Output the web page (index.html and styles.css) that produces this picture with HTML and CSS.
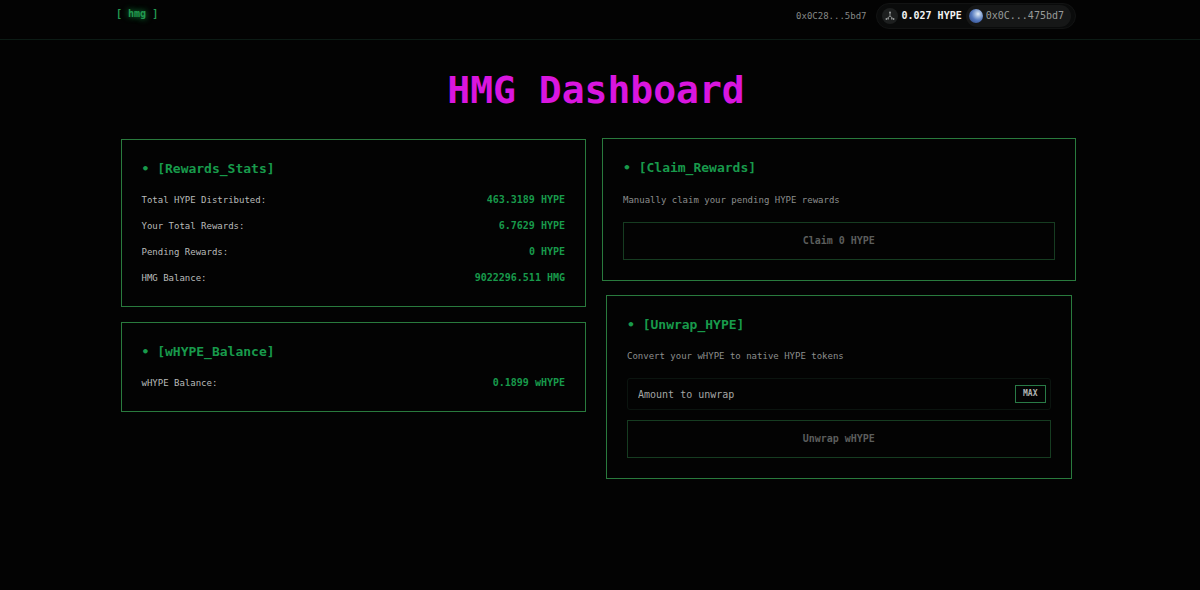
FILE: index.html
```html
<!DOCTYPE html>
<html lang="en">
<head>
<meta charset="utf-8">
<title>HMG Dashboard</title>
<link rel="stylesheet" href="styles.css">
</head>
<body>
<header class="topbar">
  <div class="topbar-inner">
    <a class="logo" href="#">[ <span class="logo-name">hmg</span> ]</a>
    <div class="wallet">
      <span class="address">0x0C28...5bd7</span>
      <button class="account" type="button">
        <span class="chain">
          <svg viewBox="0 0 16 16" width="16" height="16" aria-hidden="true">
            <circle cx="8" cy="8" r="8" fill="#1d1f1f"/>
            <g stroke="#858888" stroke-width="1" fill="none">
              <path d="M8 4.500V8M8 8L4.500 11M8 8l3.500 3M6.500 9.500v2M9.500 9.500v2"/>
            </g>
            <g fill="#989b9b">
              <circle cx="8" cy="4.500" r="1"/>
              <circle cx="4.500" cy="11" r="1"/>
              <circle cx="11.500" cy="11" r="1"/>
            </g>
          </svg>
        </span>
        <span class="balance">0.027 HYPE</span>
        <span class="account-id"><span class="avatar"></span>0x0C...475bd7</span>
      </button>
    </div>
  </div>
</header>
<main class="page">
  <h1 class="title">HMG Dashboard</h1>
  <div class="columns">
    <div class="column">
      <section class="card">
        <h2 class="card-title">• [Rewards_Stats]</h2>
        <dl class="stats">
          <div class="stat"><dt>Total HYPE Distributed:</dt><dd>463.3189 HYPE</dd></div>
          <div class="stat"><dt>Your Total Rewards:</dt><dd>6.7629 HYPE</dd></div>
          <div class="stat"><dt>Pending Rewards:</dt><dd>0 HYPE</dd></div>
          <div class="stat"><dt>HMG Balance:</dt><dd>9022296.511 HMG</dd></div>
        </dl>
      </section>
      <section class="card">
        <h2 class="card-title">• [wHYPE_Balance]</h2>
        <dl class="stats">
          <div class="stat"><dt>wHYPE Balance:</dt><dd>0.1899 wHYPE</dd></div>
        </dl>
      </section>
    </div>
    <div class="column column-actions">
      <section class="card card-active">
        <h2 class="card-title">• [Claim_Rewards]</h2>
        <p class="note">Manually claim your pending HYPE rewards</p>
        <button class="action" type="button" disabled>Claim 0 HYPE</button>
      </section>
      <section class="card">
        <h2 class="card-title">• [Unwrap_HYPE]</h2>
        <p class="note">Convert your wHYPE to native HYPE tokens</p>
        <div class="amount">
          <input class="amount-input" type="text" placeholder="Amount to unwrap" aria-label="Amount to unwrap">
          <button class="max" type="button">MAX</button>
        </div>
        <button class="action" type="button" disabled>Unwrap wHYPE</button>
      </section>
    </div>
  </div>
</main>
</body>
</html>
```
FILE: styles.css
```css
* {
  box-sizing: border-box;
}

body {
  margin: 0;
  padding-right: 8px;
  min-height: 100vh;
  background: #030303;
  color: #b9bbba;
  font-family: "DejaVu Sans Mono", "Liberation Mono", monospace;
  font-size: 10px;
  line-height: 16px;
}

button,
input {
  font: inherit;
}

.topbar {
  margin-right: -8px;
  padding: 3px 8px 10px 0;
  border-bottom: 1px solid #0c1b15;
}

.topbar-inner {
  display: flex;
  justify-content: space-between;
  align-items: flex-start;
  max-width: 960px;
  margin: 0 auto;
}

.logo {
  padding: 3px 0;
  color: #229a50;
  font-weight: 700;
  text-decoration: none;
}

.logo-name {
  text-shadow: 0 0 6px #16a34a;
}

.wallet {
  display: flex;
  align-items: center;
  gap: 9px;
}

.address {
  color: #858886;
  font-size: 9px;
}

.account {
  display: flex;
  align-items: center;
  padding: 1px 4px 1px 5px;
  border: 1px solid #121313;
  border-radius: 13px;
  background: #0a0b0b;
  color: #f3f3f3;
}

.chain {
  display: flex;
  margin-right: 4px;
}

.balance {
  margin-right: 4px;
  font-weight: 700;
}

.account-id {
  display: flex;
  align-items: center;
  gap: 3px;
  padding: 3px 7px 3px 3px;
  border-radius: 11px;
  background: #161717;
  color: #989b9a;
}

.avatar {
  width: 14px;
  height: 14px;
  border-radius: 50%;
  background: radial-gradient(circle at 65% 35%, #e4edf7 0, #a5bde0 20%, #5478bd 50%, #273e78 100%);
}

.page {
  max-width: 951px;
  margin: 0 auto;
}

.title {
  margin: 0;
  padding: 26px 0 25px;
  color: #d916df;
  font-size: 38px;
  line-height: 48px;
  font-weight: 700;
  text-align: center;
}

.columns {
  display: grid;
  grid-template-columns: 1fr 1fr;
  align-items: start;
  gap: 20px;
}

.column {
  display: grid;
  gap: 15px;
}

.column-actions {
  gap: 14px;
  margin-top: -1px;
}

.card {
  padding: 20px;
  border: 1px solid #297a3d;
}

.card-title {
  margin: 0 0 14px;
  color: #189a4b;
  font-size: 13px;
  line-height: 18px;
  font-weight: 700;
}

.card-active {
  margin: 0 -4px;
}

.card-active .card-title {
  margin-bottom: 15px;
}

.stats {
  display: grid;
  gap: 10px;
  margin: 0;
}

.stat {
  display: flex;
  justify-content: space-between;
}

.stat dt {
  font-size: 9px;
}

.stat dd {
  margin: 0;
  color: #189a4b;
  font-weight: 700;
}

.note {
  margin: 0 0 14px;
  color: #8c8e8d;
  font-size: 9px;
}

.action {
  display: block;
  width: 100%;
  padding: 10px;
  border: 1px solid #163c21;
  background: transparent;
  color: #5b5d5c;
  line-height: 16px;
  font-weight: 700;
}

.amount {
  display: flex;
  align-items: center;
  margin-bottom: 10px;
  padding-right: 4px;
  border: 1px solid #0b140f;
  border-radius: 3px;
}

.amount-input {
  flex: 1;
  min-width: 0;
  height: 30px;
  padding: 0 10px;
  border: 0;
  outline: 0;
  background: transparent;
  color: #a4a6a5;
}

.amount-input::placeholder {
  color: #a4a6a5;
  opacity: 1;
}

.max {
  padding: 0 7px;
  border: 1px solid #297a46;
  background: transparent;
  color: #b0b3b2;
  font-size: 8px;
  line-height: 16px;
  font-weight: 700;
}
```
